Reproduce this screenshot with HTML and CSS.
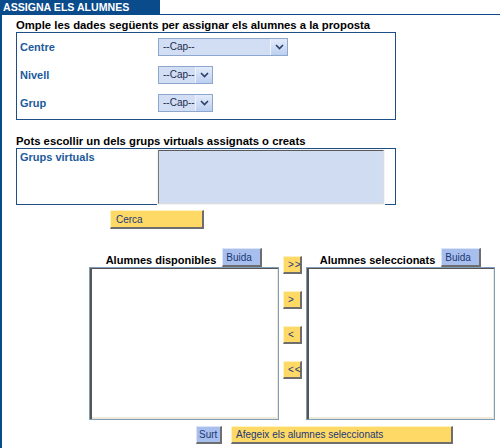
FILE: index.html
```html
<!DOCTYPE html>
<html lang="ca">
<head>
<meta charset="utf-8">
<title>Assigna els alumnes</title>
<link rel="stylesheet" href="styles.css">
</head>
<body>
<div class="page">
  <div class="titlebar"><div class="title">ASSIGNA ELS ALUMNES</div></div>
  <div class="content">
    <h2 class="heading">Omple les dades següents per assignar els alumnes a la proposta</h2>
    <div class="box box-fields">
      <div class="field">
        <span class="label">Centre</span>
        <div class="select select-wide"><span class="select-text">--Cap--</span><span class="select-arrow"><svg width="9" height="6" viewBox="0 0 9 6"><path d="M1 1 L4.5 4.5 L8 1" fill="none" stroke="#2b3e66" stroke-width="1.6"/></svg></span></div>
      </div>
      <div class="field">
        <span class="label">Nivell</span>
        <div class="select select-narrow"><span class="select-text">--Cap--</span><span class="select-arrow"><svg width="9" height="6" viewBox="0 0 9 6"><path d="M1 1 L4.5 4.5 L8 1" fill="none" stroke="#2b3e66" stroke-width="1.6"/></svg></span></div>
      </div>
      <div class="field">
        <span class="label">Grup</span>
        <div class="select select-narrow"><span class="select-text">--Cap--</span><span class="select-arrow"><svg width="9" height="6" viewBox="0 0 9 6"><path d="M1 1 L4.5 4.5 L8 1" fill="none" stroke="#2b3e66" stroke-width="1.6"/></svg></span></div>
      </div>
    </div>
    <h2 class="heading heading-second">Pots escollir un dels grups virtuals assignats o creats</h2>
    <div class="box box-virtual">
      <span class="label">Grups virtuals</span>
      <div class="virtual-list"></div>
    </div>
    <div class="search-row"><button class="btn btn-yellow btn-search">Cerca</button></div>
    <div class="transfer">
      <div class="transfer-col">
        <div class="transfer-head"><span class="transfer-title">Alumnes disponibles</span><button class="btn btn-blue btn-clear">Buida</button></div>
        <div class="listbox"></div>
      </div>
      <div class="arrows">
        <button class="btn btn-yellow btn-arrow">&gt;&gt;</button>
        <button class="btn btn-yellow btn-arrow">&gt;</button>
        <button class="btn btn-yellow btn-arrow">&lt;</button>
        <button class="btn btn-yellow btn-arrow">&lt;&lt;</button>
      </div>
      <div class="transfer-col transfer-col-right">
        <div class="transfer-head"><span class="transfer-title">Alumnes seleccionats</span><button class="btn btn-blue btn-clear">Buida</button></div>
        <div class="listbox"></div>
      </div>
    </div>
    <div class="actions">
      <button class="btn btn-blue btn-exit">Surt</button>
      <button class="btn btn-yellow btn-add">Afegeix els alumnes seleccionats</button>
    </div>
  </div>
</div>
</body>
</html>
```
FILE: styles.css
```css
* { box-sizing: border-box; }

body {
  margin: 0;
  background: #ffffff;
  font-family: "Liberation Sans", Arial, sans-serif;
}

.page {
  border-left: 2px solid #0a4b8c;
  min-height: 448px;
}

.titlebar {
  height: 15px;
  border-bottom: 1px solid #0a4b8c;
}

.title {
  width: 158px;
  height: 14px;
  background: #0a4b8c;
  color: #ffffff;
  font-weight: bold;
  font-size: 10.6px;
  line-height: 14px;
  padding-left: 1px;
  white-space: nowrap;
}

.content {
  padding-left: 14px;
}

.heading {
  margin: 3px 0 0;
  font-size: 11.3px;
  line-height: 14px;
  font-weight: bold;
  color: #000000;
  white-space: nowrap;
}

.heading-second {
  margin-top: 14px;
}

.box {
  width: 380px;
  border: 1px solid #1d4f86;
}

.label {
  color: #1b5a9c;
  font-size: 11px;
  font-weight: bold;
  line-height: 14px;
}

.box-fields {
  height: 88px;
  padding: 5px 0 7px 3px;
  display: flex;
  flex-direction: column;
  gap: 10px;
}

.field {
  display: grid;
  grid-template-columns: 138px auto;
  align-items: center;
  height: 18px;
}

.select {
  display: flex;
  height: 18px;
  border: 1px solid #8ea7cf;
  background: #d2def4;
}

.select-wide { width: 130px; }
.select-narrow { width: 55px; }

.select-text {
  padding-left: 4px;
  font-size: 10px;
  line-height: 16px;
  color: #1d2b4d;
}

.select-arrow {
  margin-left: auto;
  width: 17px;
  height: 16px;
  border-left: 1px solid #eef3fc;
  background: linear-gradient(#e3ebfa, #bccff1);
  display: flex;
  align-items: center;
  justify-content: center;
}

.box-virtual {
  height: 57px;
  padding: 1px 0 0 3px;
  display: grid;
  grid-template-columns: 138px 226px;
  align-items: start;
}

.virtual-list {
  height: 54px;
  background: #cfdcf2;
  border: 1px solid;
  border-color: #5a5a5a #dcdcdc #dcdcdc #7a7a7a;
  box-shadow: 0 0 0 1px #f4f4f4;
}

.btn {
  display: block;
  margin: 0;
  height: 19px;
  padding: 0 0 0 4px;
  border-style: solid;
  border-width: 1px 2px 2px 1px;
  font-family: "Liberation Sans", Arial, sans-serif;
  font-size: 10px;
  line-height: 15px;
  color: #1a3775;
  text-align: left;
  white-space: nowrap;
}

.btn-yellow {
  background: #ffd966;
  border-color: #fff2c2 #6e6e6e #6e6e6e #fff2c2;
}

.btn-blue {
  background: #a8bfee;
  border-color: #dbe5f9 #6e6e6e #6e6e6e #dbe5f9;
}

.search-row {
  margin-top: 5px;
  padding-left: 94px;
}

.btn-search {
  width: 94px;
  padding-left: 5px;
}

.transfer {
  display: flex;
  margin: 19px 0 0 73px;
}

.transfer-col {
  width: 190px;
  display: flex;
  flex-direction: column;
}

.transfer-col-right {
  width: 189px;
}

.transfer-head {
  height: 19px;
  display: flex;
  justify-content: center;
  align-items: flex-end;
  gap: 6px;
}

.transfer-title {
  font-size: 11px;
  font-weight: bold;
  line-height: 14px;
  color: #000000;
}

.btn-clear {
  width: 40px;
  padding-left: 3px;
}

.listbox {
  height: 153px;
  background: #ffffff;
  border: 1px solid #7f9db9;
  box-shadow: inset 2px 1px 0 #555555, inset -1px -2px 0 #ece9d8;
}

.arrows {
  width: 27px;
  padding: 8px 0 0 4px;
  display: flex;
  flex-direction: column;
  gap: 17px;
}

.btn-arrow {
  width: 19px;
  height: 18px;
  padding-left: 4px;
  letter-spacing: 1px;
}

.actions {
  display: flex;
  gap: 9px;
  margin: 6px 0 0 180px;
}

.btn-exit {
  width: 26px;
  height: 18px;
  padding-left: 2px;
}

.btn-add {
  width: 222px;
  height: 18px;
}
```
